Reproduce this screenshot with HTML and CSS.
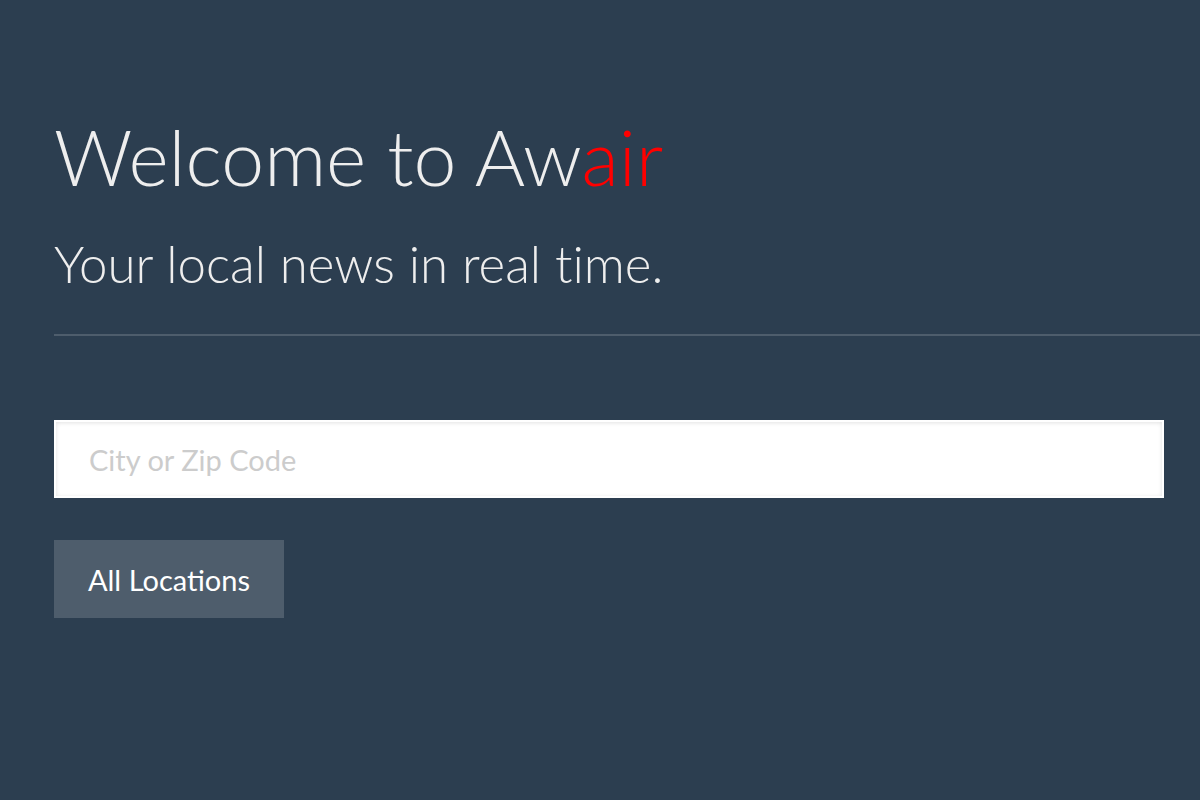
FILE: index.html
```html
<!DOCTYPE html>
<html>
<head>
<meta charset="utf-8">
<link rel="stylesheet" href="styles.css">
</head>
<body>
<main class="page">
  <h1 class="title">Welcome to Aw<span class="accent">air</span></h1>
  <p class="subtitle">Your local news in real time.</p>
  <hr class="rule">
  <form class="search">
    <input class="field" type="text" placeholder="City or Zip Code">
    <div class="actions">
      <button class="btn" type="button">All Locations</button>
    </div>
  </form>
</main>
</body>
</html>
```
FILE: styles.css
```css
html, body {
  margin: 0;
  padding: 0;
  background: #2c3e50;
  height: 100%;
}
body {
  font-family: Lato, "Open Sans", sans-serif;
  color: #eeeeee;
  font-variant-ligatures: none;
  font-feature-settings: "liga" 0, "clig" 0;
}
.page {
  padding: 108px 0 0 54px;
}
.title {
  margin: 0;
  font-size: 77px;
  font-weight: 300;
  line-height: 96px;
  color: #eeeeee;
}
.accent {
  color: #ff0000;
}
.subtitle {
  margin: 28px 0 0 0;
  font-size: 51px;
  font-weight: 300;
  line-height: 64px;
}
.rule {
  margin: 38px 0 0 0;
  border: 0;
  height: 2px;
  background: #4e5d6c;
}
.search {
  margin-top: 84px;
  width: 1110px;
}
.field {
  display: block;
  box-sizing: border-box;
  width: 100%;
  height: 78px;
  margin: 0;
  padding: 0 33px;
  border: 2px solid #ffffff;
  background: #ffffff;
  box-shadow: inset 0 1px 4px rgba(0,0,0,0.12);
  font-family: Lato, sans-serif;
  font-weight: 400;
  font-size: 29px;
  color: #333;
  outline: none;
}
.field::placeholder {
  color: #cccccc;
}
.actions {
  margin-top: 42px;
}
.btn {
  display: block;
  box-sizing: border-box;
  width: 230px;
  height: 78px;
  margin: 0;
  border: 0;
  padding: 0;
  background: #4e5d6c;
  color: #ffffff;
  font-family: Lato, sans-serif;
  font-weight: 400;
  font-size: 29px;
}
```
